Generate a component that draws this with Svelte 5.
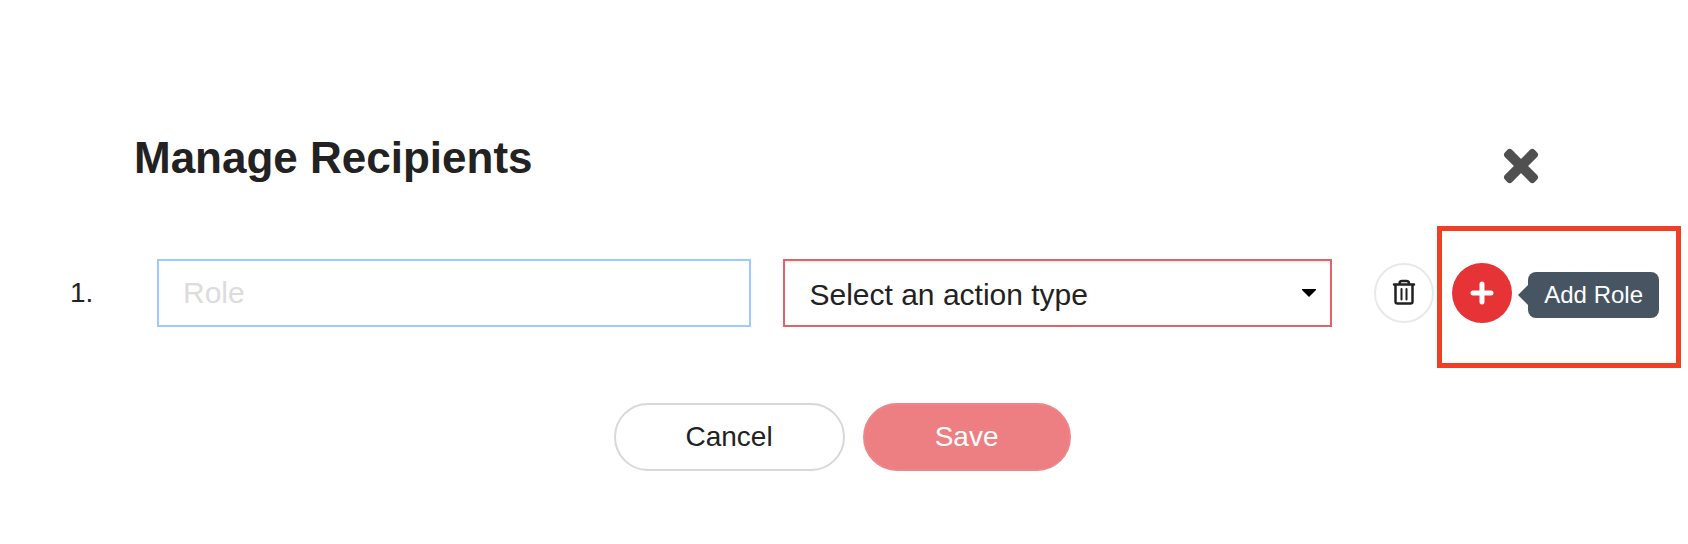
<script lang="ts">
  type Recipient = { id: number; role: string; action: string }

  const actions = ['Sign', 'Approve', 'Receive a copy']

  let recipients: Recipient[] = [{ id: 1, role: '', action: '' }]
  let gid = 2

  const addRole = () =>
    (recipients = [...recipients, { id: gid++, role: '', action: '' }])
  const removeRole = (id: number) =>
    (recipients = recipients.filter((r) => r.id != id))

  $: complete = recipients.every((r) => r.role && r.action)
</script>

<main class="dialog">
  <header>
    <h1>Manage Recipients</h1>
    <button class="close" type="button" aria-label="Close">
      <svg viewBox="0 0 36 36" width="36" height="36">
        <rect x="-3" y="13" width="42" height="10" rx="3.5" transform="rotate(45 18 18)" />
        <rect x="-3" y="13" width="42" height="10" rx="3.5" transform="rotate(-45 18 18)" />
      </svg>
    </button>
  </header>

  {#each recipients as recipient, i (recipient.id)}
    <div class="recipient">
      <div class="fields">
        <span class="number">{i + 1}.</span>
        <input
          class="role"
          type="text"
          placeholder="Role"
          aria-label="Role"
          bind:value={recipient.role}
        />
        <div class="action">
          <select aria-label="Action type" bind:value={recipient.action}>
            <option value="">Select an action type</option>
            {#each actions as action}
              <option value={action}>{action}</option>
            {/each}
          </select>
          <svg class="caret" viewBox="0 0 14 8" width="14" height="8">
            <path d="M0 0H14V1L7 8L0 1Z" />
          </svg>
        </div>
        <button
          class="round remove"
          type="button"
          aria-label="Remove role"
          on:click={() => removeRole(recipient.id)}
        >
          <svg viewBox="0 0 24 28" width="24" height="28">
            <path d="M2 5.5H22M3.5 5.5V22.5Q3.5 24.5 5.5 24.5H18.5Q20.5 24.5 20.5 22.5V5.5M7.5 4.5Q7.5 2 10 2H14.5Q17 2 17 4.5" />
            <path class="thin" d="M9.5 10V20.5M14.5 10V20.5" />
          </svg>
        </button>
      </div>
      <div class="highlight">
        <button
          class="round add"
          type="button"
          aria-label="Add role"
          on:click={addRole}
        >
          <svg viewBox="0 0 24 24" width="24" height="24">
            <path d="M12 3V21M3 12H21" />
          </svg>
        </button>
        <span class="tooltip" role="tooltip">Add Role</span>
      </div>
    </div>
  {/each}

  <footer>
    <button class="pill cancel" type="button">Cancel</button>
    <button class="pill save" type="button" disabled={!complete}>Save</button>
  </footer>
</main>

<style>
  :global(body) {
    margin: 0;
    background: white;
  }

  .dialog,
  button,
  input,
  select {
    font-family: 'Liberation Sans', Arial, Helvetica, sans-serif;
    color: #222;
  }

  button,
  input,
  select {
    box-sizing: border-box;
    margin: 0;
  }

  .dialog {
    padding: 132px 7px 72px 3px;
  }

  header {
    display: flex;
    justify-content: space-between;
    align-items: flex-end;
    padding: 0 142px 0 131px;
  }

  h1 {
    margin: 0;
    font-size: 44px;
    line-height: 52px;
  }

  .close {
    padding: 0;
    border: none;
    background: none;
    cursor: pointer;
  }

  svg {
    display: block;
    fill: none;
    stroke-linecap: round;
    stroke-linejoin: round;
  }

  .close svg {
    fill: #505050;
  }

  .recipient {
    display: flex;
    align-items: flex-start;
    gap: 3px;
    margin-top: 42px;
  }

  .fields {
    flex: 1;
    display: grid;
    grid-template-columns: 87px 21fr 22fr 60px;
    align-items: center;
    padding: 33px 0 0 67px;
  }

  .number {
    font-size: 28px;
  }

  .role {
    width: 100%;
    height: 68px;
    padding: 0 24px;
    border: 2px solid #9accff;
    font-size: 30px;
    outline: none;
  }

  .role::placeholder {
    color: #dcdcdc;
  }

  .action {
    position: relative;
    margin: 0 42px 0 32px;
  }

  select {
    display: block;
    width: 100%;
    height: 68px;
    padding: 2px 24px 0;
    border: 2px solid #de636b;
    border-radius: 0;
    background: white;
    box-shadow: inset 0 2px 2px rgba(0, 0, 0, 0.075);
    font-size: 30px;
    appearance: none;
  }

  .caret {
    position: absolute;
    right: 16px;
    top: 30px;
    fill: black;
    pointer-events: none;
  }

  .round {
    flex: none;
    display: flex;
    align-items: center;
    justify-content: center;
    width: 60px;
    height: 60px;
    padding: 0;
    border-radius: 50%;
    cursor: pointer;
  }

  .remove {
    border: 2px solid #e8eaea;
    background: white;
  }

  .remove svg {
    stroke: #222;
    stroke-width: 2.5;
  }

  .remove .thin {
    stroke-width: 2;
  }

  .add {
    border: none;
    background: #e53336;
  }

  .add svg {
    stroke: white;
    stroke-width: 5;
  }

  .highlight {
    display: flex;
    align-items: center;
    gap: 16px;
    padding: 32px 17px 40px 10px;
    border: 5px solid #ee4025;
  }

  .tooltip {
    position: relative;
    margin-top: 4px;
    padding: 0 16px;
    border-radius: 8px;
    background: #475462;
    color: white;
    font-size: 24px;
    line-height: 46px;
    white-space: nowrap;
  }

  .tooltip::before {
    content: '';
    position: absolute;
    right: 100%;
    top: 13px;
    border: 10px solid transparent;
    border-left: none;
    border-right-color: #475462;
  }

  footer {
    display: flex;
    justify-content: center;
    gap: 18px;
    margin-top: 35px;
  }

  .pill {
    height: 68px;
    padding: 0 70px;
    border: 2px solid #d8d8d8;
    border-radius: 34px;
    background: white;
    font-size: 28px;
    cursor: pointer;
  }

  .save {
    border-color: #ee8588;
    background: #ed7f82;
    color: white;
  }
</style>
